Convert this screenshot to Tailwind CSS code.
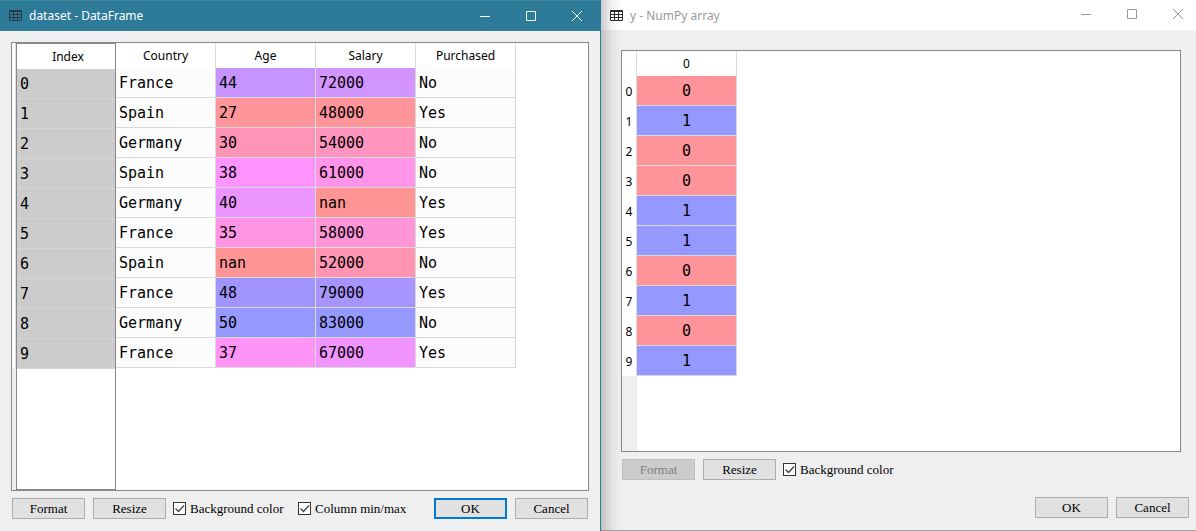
<!DOCTYPE html>
<html lang="en">
<head>
<meta charset="utf-8">
<title>Variable viewer</title>
<script src="https://cdn.jsdelivr.net/npm/@tailwindcss/browser@4"></script>
</head>
<body class="bg-[#efefef] font-['Noto_Sans',sans-serif] text-xs text-black">
<svg class="hidden">
  <symbol id="grid" viewBox="0 0 13 11"><path fill="currentColor" fill-rule="evenodd" d="M1 0h11a1 1 0 0 1 1 1v9a1 1 0 0 1-1 1H1a1 1 0 0 1-1-1V1a1 1 0 0 1 1-1zM1 2v2h3V2zM5 2v2h3V2zM9 2v2h3V2zM1 5v2h3V5zM5 5v2h3V5zM9 5v2h3V5zM1 8v2h3V8zM5 8v2h3V8zM9 8v2h3V8z"/></symbol>
  <symbol id="min" viewBox="0 0 10 10"><path d="M0 5.5h10" stroke="currentColor"/></symbol>
  <symbol id="max" viewBox="0 0 10 10"><path d="M.5.5h9v9h-9z" fill="none" stroke="currentColor"/></symbol>
  <symbol id="close" viewBox="0 0 10 10"><path d="M0 0l10 10M10 0L0 10" stroke="currentColor"/></symbol>
  <symbol id="tick" viewBox="0 0 13 13"><path d="M2.5 6.5l3 3 5.500-6" fill="none" stroke="#404040" stroke-width="1.3"/></symbol>
</svg>
<div class="grid min-h-screen grid-cols-[601fr_595fr]">

  <section class="flex flex-col border-r border-[#2d7b99]">
    <header class="flex h-[31px] items-center overflow-hidden border-t border-[#4489a3] bg-[#2d7b99] pl-[9px] text-white">
      <svg class="mb-px h-[11px] w-[13px] text-[#2b3a42]"><use href="#grid"/></svg>
      <h1 class="ml-[7px] flex-1">dataset - DataFrame</h1>
      <button aria-label="Minimize" class="grid h-full w-[46px] place-items-center"><svg class="size-[10px]"><use href="#min"/></svg></button>
      <button aria-label="Maximize" class="grid h-full w-[46px] place-items-center"><svg class="size-[10px]"><use href="#max"/></svg></button>
      <button aria-label="Close" class="grid h-full w-[46px] place-items-center"><svg class="size-[10px]"><use href="#close"/></svg></button>
    </header>
    <main class="flex flex-1 flex-col px-[11px] pt-[11px] pb-3">
      <div class="flex flex-1 border border-[#828790] bg-white">
        <div class="flex w-1 flex-col bg-[#efefef]"><div class="h-[325px] border-r border-[#dcdcdc] bg-white"></div></div>
        <div class="w-[100px] border border-[#828790]">
          <table class="w-full table-fixed border-separate border-spacing-0">
            <thead><tr class="h-[25px]"><th class="p-0 pl-1 text-center font-normal">Index</th></tr></thead>
            <tbody id="index" class="font-['DejaVu_Sans_Mono',monospace] text-[15px] leading-5"></tbody>
          </table>
        </div>
        <div>
          <table class="w-[400px] table-fixed border-separate border-spacing-0">
            <thead><tr class="h-[25px]">
              <th class="border-r border-[#dcdcdc] p-0 text-center font-normal">Country</th>
              <th class="border-r border-[#dcdcdc] p-0 text-center font-normal">Age</th>
              <th class="border-r border-[#dcdcdc] p-0 text-center font-normal">Salary</th>
              <th class="border-r border-[#dcdcdc] p-0 text-center font-normal">Purchased</th>
            </tr></thead>
            <tbody id="frame" class="font-['DejaVu_Sans_Mono',monospace] text-[15px] leading-5"></tbody>
          </table>
        </div>
      </div>
      <footer class="flex items-center gap-2 pt-[7px] pr-px pl-px font-['Liberation_Serif',serif] text-[13px]">
        <button class="h-[21px] w-[73px] border border-[#adadad] bg-[#e1e1e1] leading-[19px]">Format</button>
        <button class="h-[21px] w-[73px] border border-[#adadad] bg-[#e1e1e1] leading-[19px]">Resize</button>
        <label class="-ml-px flex w-[117px] items-center gap-1 whitespace-nowrap"><span class="grid shrink-0"><input type="checkbox" checked class="peer col-start-1 row-start-1 size-[13px] appearance-none border border-[#333] bg-white"><svg class="pointer-events-none invisible col-start-1 row-start-1 size-[13px] peer-checked:visible"><use href="#tick"/></svg></span>Background color</label>
        <label class="flex items-center gap-1 whitespace-nowrap"><span class="grid shrink-0"><input type="checkbox" checked class="peer col-start-1 row-start-1 size-[13px] appearance-none border border-[#333] bg-white"><svg class="pointer-events-none invisible col-start-1 row-start-1 size-[13px] peer-checked:visible"><use href="#tick"/></svg></span>Column min/max</label>
        <button class="ml-auto h-[21px] w-[73px] border-2 border-[#0078d7] bg-[#e1e1e1] leading-[17px]">OK</button>
        <button class="h-[21px] w-[73px] border border-[#adadad] bg-[#e1e1e1] leading-[19px]">Cancel</button>
      </footer>
    </main>
  </section>

  <section class="relative flex flex-col border-b border-[#a0a0a0]">
    <div class="pointer-events-none absolute inset-y-0 left-0 w-5 bg-linear-to-r from-black/20 via-black/6 to-transparent"></div>
    <header class="flex h-[30px] items-center overflow-hidden bg-white pl-[9px] text-[#999]">
      <svg class="h-[11px] w-[13px] text-[#2b2b2b]"><use href="#grid"/></svg>
      <h1 class="ml-[7px] flex-1 pt-0.5">y - NumPy array</h1>
      <div class="-mr-[5px] flex h-full shrink-0">
        <button aria-label="Minimize" class="grid h-full w-[46px] place-items-center"><svg class="mb-0.5 size-[10px]"><use href="#min"/></svg></button>
        <button aria-label="Maximize" class="grid h-full w-[46px] place-items-center"><svg class="mb-0.5 size-[10px]"><use href="#max"/></svg></button>
        <button aria-label="Close" class="grid h-full w-[46px] place-items-center"><svg class="mb-0.5 size-[10px]"><use href="#close"/></svg></button>
      </div>
    </header>
    <main class="flex flex-1 flex-col pt-5 pr-[7px] pb-3 pl-5">
      <div class="mr-2 flex flex-1 border border-[#828790] bg-linear-to-r from-[#efefef] from-[15px] to-white to-[15px]">
        <div>
          <table class="w-[115px] table-fixed border-separate border-spacing-0">
            <colgroup><col class="w-[15px]"><col class="w-[100px]"></colgroup>
            <thead><tr class="h-[25px]">
              <td class="border-r border-[#dcdcdc] bg-white p-0"></td>
              <th class="border-r border-[#dcdcdc] bg-white p-0 text-center font-normal">0</th>
            </tr></thead>
            <tbody id="array"></tbody>
          </table>
        </div>
      </div>
      <div class="flex items-center gap-2 pt-[7px] pl-px font-['Liberation_Serif',serif] text-[13px]">
        <button disabled class="h-[21px] w-[73px] border border-[#bfbfbf] bg-[#cccccc] leading-[19px] text-[#808080]">Format</button>
        <button class="h-[21px] w-[73px] border border-[#adadad] bg-[#e1e1e1] leading-[19px]">Resize</button>
        <label class="-ml-px flex items-center gap-1 whitespace-nowrap"><span class="grid shrink-0"><input type="checkbox" checked class="peer col-start-1 row-start-1 size-[13px] appearance-none border border-[#333] bg-white"><svg class="pointer-events-none invisible col-start-1 row-start-1 size-[13px] peer-checked:visible"><use href="#tick"/></svg></span>Background color</label>
      </div>
      <footer class="flex justify-end gap-2 pt-[17px] font-['Liberation_Serif',serif] text-[13px]">
        <button class="h-[21px] w-[73px] border border-[#adadad] bg-[#e1e1e1] leading-[19px]">OK</button>
        <button class="h-[21px] w-[73px] border border-[#adadad] bg-[#e1e1e1] leading-[19px]">Cancel</button>
      </footer>
    </main>
  </section>
</div>
<script>
const rows = [
  ['France', 44, 72000, 'No'], ['Spain', 27, 48000, 'Yes'], ['Germany', 30, 54000, 'No'],
  ['Spain', 38, 61000, 'No'], ['Germany', 40, NaN, 'Yes'], ['France', 35, 58000, 'Yes'],
  ['Spain', NaN, 52000, 'No'], ['France', 48, 79000, 'Yes'], ['Germany', 50, 83000, 'No'],
  ['France', 37, 67000, 'Yes']
];
const y = [0, 1, 0, 0, 1, 1, 0, 1, 0, 1];
// Hue runs from blue at the maximum to red at the minimum.
function shade(v, lo, hi) {
  if (Number.isNaN(v)) return 'rgb(255 148 148)';
  const h = 3.96 + 1.98 * (hi - v) / (hi - lo), c = n => Math.round(148 + 107 * n);
  if (h < 4) return `rgb(148 ${c(4 - h)} 255)`;
  return h < 5 ? `rgb(${c(h - 4)} 148 255)` : `rgb(255 148 ${c(6 - h)})`;
}
const plain = v => `<td class="border-r border-b border-[#d8d8d8] bg-[#fcfcfc] p-0 pt-px pl-[3px]">${v}</td>`;
const tinted = (v, lo, hi) => `<td class="border-r border-b border-[#d8d8d8] p-0 pt-px pl-[3px]" style="background:${shade(v, lo, hi)}">${Number.isNaN(v) ? 'nan' : v}</td>`;
document.getElementById('index').innerHTML = rows.map((r, i) =>
  `<tr class="h-[30px]"><th class="border-b border-[#d4d4d4] bg-[#cccccc] p-0 pt-px pl-[3px] text-left font-normal">${i}</th></tr>`).join('');
document.getElementById('frame').innerHTML = rows.map(r =>
  `<tr class="h-[30px]">${plain(r[0])}${tinted(r[1], 27, 50)}${tinted(r[2], 48000, 83000)}${plain(r[3])}</tr>`).join('');
document.getElementById('array').innerHTML = y.map((v, i) =>
  `<tr class="h-[30px]"><th class="border-r border-[#dcdcdc] bg-white p-0 pt-px text-center font-normal">${i}</th><td class="border-r border-b border-[#d8d8d8] p-0 pt-px text-center font-['DejaVu_Sans_Mono',monospace] text-[15px] leading-5" style="background:${shade(v, 0, 1)}">${v}</td></tr>`).join('');
</script>
</body>
</html>
